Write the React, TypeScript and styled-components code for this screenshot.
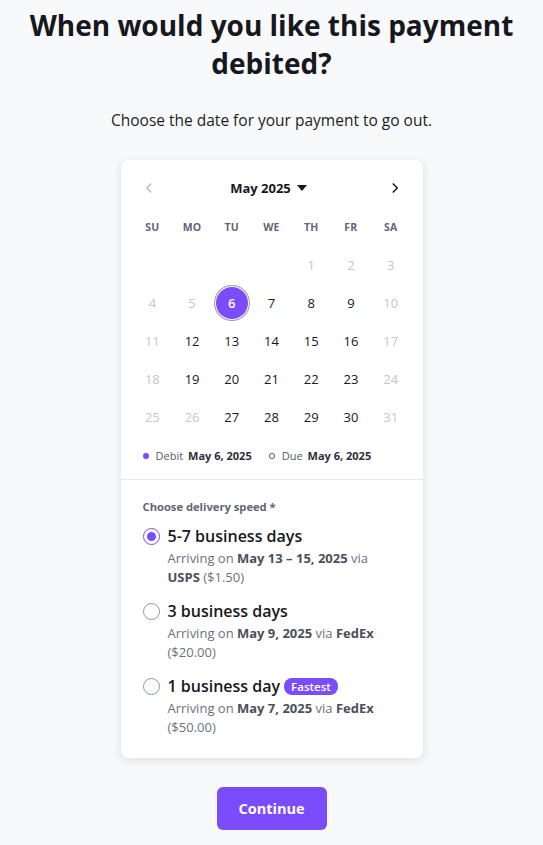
import React, {useState} from "react";
import styled, {createGlobalStyle} from "styled-components";

const purple = "#7a4cfb";

const Global = createGlobalStyle`
  html, body {
    margin: 0;
    padding: 0;
    background: #f8f9fb;
  }
  body {
    font-family: "Open Sans", "Liberation Sans", sans-serif;
    color: #16181d;
  }
`;

const Page = styled.div`
  display: flex;
  flex-direction: column;
  align-items: center;
  padding-top: 6px;
  padding-bottom: 20px;
`;

const Title = styled.h1`
  margin: 0;
  font-size: 28px;
  line-height: 38px;
  font-weight: 700;
  text-align: center;
  color: #16181d;
  width: 500px;
`;

const Subtitle = styled.p`
  margin: 28px 0 0;
  font-size: 15.5px;
  line-height: 20px;
  color: #1c1e24;
`;

const Card = styled.div`
  margin-top: 30px;
  width: 302px;
  background: #fff;
  border-radius: 8px;
  box-shadow: 0 2px 10px rgba(20, 24, 40, 0.12);
`;

const CalendarSection = styled.div`
  padding: 16px 12px 15px;
  border-bottom: 1px solid #e6e8ec;
`;

const MonthBar = styled.div`
  display: flex;
  align-items: center;
  justify-content: space-between;
  height: 24px;
`;

const NavButton = styled.button<{$muted?: boolean}>`
  width: 32px;
  height: 24px;
  border: 0;
  background: none;
  padding: 0;
  display: flex;
  align-items: center;
  justify-content: center;
  color: ${p => (p.$muted ? "#b8bcc6" : "#16181d")};
  cursor: pointer;
`;

const MonthLabel = styled.div`
  display: flex;
  align-items: center;
  gap: 6px;
  font-size: 13px;
  font-weight: 700;
  color: #16181d;
  margin-right: 6px;
`;

const Grid = styled.div`
  display: grid;
  grid-template-columns: repeat(7, 1fr);
  grid-auto-rows: 38px;
  margin-top: 8px;
`;

const WeekDay = styled.div`
  display: flex;
  align-items: center;
  justify-content: center;
  font-size: 10.5px;
  font-weight: 700;
  color: #5f6675;
  letter-spacing: 0.2px;
`;

const DayCell = styled.div`
  display: flex;
  align-items: center;
  justify-content: center;
`;

const Day = styled.span<{$state: "off" | "on" | "selected"}>`
  width: 34px;
  height: 34px;
  border-radius: 50%;
  display: flex;
  align-items: center;
  justify-content: center;
  font-size: 13px;
  color: ${p => (p.$state === "off" ? "#c3c7cf" : p.$state === "selected" ? "#fff" : "#16181d")};
  background: ${p => (p.$state === "selected" ? purple : "transparent")};
  box-shadow: ${p => (p.$state === "selected" ? "inset 0 0 0 1px #fff, 0 0 0 1px #9aa0ad" : "none")};
  font-weight: ${p => (p.$state === "selected" ? 600 : 400)};
`;

const Legend = styled.div`
  display: flex;
  align-items: center;
  gap: 17px;
  margin-top: 12px;
  padding-left: 10px;
  font-size: 11px;
  line-height: 16px;
  color: #555b68;
`;

const LegendItem = styled.span`
  display: flex;
  align-items: center;
  gap: 5px;
  b {
    color: #2b2f3a;
    font-weight: 700;
  }
`;

const Dot = styled.span<{$hollow?: boolean}>`
  width: 6px;
  height: 6px;
  border-radius: 50%;
  box-sizing: border-box;
  background: ${p => (p.$hollow ? "transparent" : purple)};
  border: ${p => (p.$hollow ? "1px solid #555b68" : "none")};
  margin-right: 2px;
`;

const DeliverySection = styled.div`
  padding: 20px 22px 21px;
`;

const FieldLabel = styled.div`
  font-size: 11.2px;
  line-height: 14px;
  font-weight: 700;
  color: #5f6675;
`;

const Options = styled.div`
  display: flex;
  flex-direction: column;
  gap: 13px;
  margin-top: 11px;
`;

const Option = styled.label`
  display: flex;
  gap: 8px;
  cursor: pointer;
`;

const Radio = styled.span<{$checked: boolean}>`
  flex: none;
  width: 17px;
  height: 17px;
  margin-top: 2.5px;
  border-radius: 50%;
  box-sizing: border-box;
  border: 1.5px solid ${p => (p.$checked ? purple : "#8f95a3")};
  display: flex;
  align-items: center;
  justify-content: center;
  &::after {
    content: "";
    width: 9px;
    height: 9px;
    border-radius: 50%;
    background: ${p => (p.$checked ? purple : "transparent")};
  }
`;

const OptionBody = styled.div`
  display: flex;
  flex-direction: column;
`;

const OptionTitle = styled.div`
  display: flex;
  align-items: center;
  gap: 4px;
  font-size: 16px;
  line-height: 22px;
  font-weight: 600;
  color: #16181d;
`;

const Badge = styled.span`
  background: ${purple};
  color: #fff;
  font-size: 11.5px;
  font-weight: 600;
  line-height: 17px;
  padding: 0 7px;
  border-radius: 8px;
`;

const OptionText = styled.div`
  margin-top: 2px;
  font-size: 13px;
  line-height: 19px;
  color: #6b7180;
  b {
    color: #4b505c;
    font-weight: 700;
  }
`;

const ContinueButton = styled.button`
  margin-top: 29px;
  width: 110px;
  height: 43px;
  border: 0;
  border-radius: 6px;
  background: ${purple};
  color: #fff;
  font-family: inherit;
  font-size: 14.5px;
  font-weight: 700;
  cursor: pointer;
`;

const weekDays = ["SU", "MO", "TU", "WE", "TH", "FR", "SA"];
const offDays = [1, 2, 3, 4, 5, 10, 11, 17, 18, 24, 25, 26, 31];

const speeds = [
  {id: "usps", title: "5-7 business days", dates: "May 13 – 15, 2025", carrier: "USPS", price: "($1.50)"},
  {id: "fedex3", title: "3 business days", dates: "May 9, 2025", carrier: "FedEx", price: "($20.00)"},
  {id: "fedex1", title: "1 business day", dates: "May 7, 2025", carrier: "FedEx", price: "($50.00)", fastest: true},
];

function Chevron({dir}: {dir: "left" | "right"}) {
  return (
    <svg width="14" height="14" viewBox="0 0 24 24" fill="none" stroke="currentColor" strokeWidth="2.6" strokeLinecap="round" strokeLinejoin="round">
      {dir === "left" ? <path d="M15 5l-7 7 7 7"/> : <path d="M9 5l7 7-7 7"/>}
    </svg>
  );
}

export default function App() {
  const [selected, setSelected] = useState(6);
  const [speed, setSpeed] = useState("usps");
  const cells: (number | null)[] = [null, null, null, null];
  for (let d = 1; d <= 31; d++) cells.push(d);

  return (
    <Page>
      <Global/>
      <Title>When would you like this payment debited?</Title>
      <Subtitle>Choose the date for your payment to go out.</Subtitle>
      <Card>
        <CalendarSection>
          <MonthBar>
            <NavButton $muted><Chevron dir="left"/></NavButton>
            <MonthLabel>
              May 2025
              <svg width="10" height="6" viewBox="0 0 10 6"><path d="M0 0h10L5 6z" fill="#16181d"/></svg>
            </MonthLabel>
            <NavButton><Chevron dir="right"/></NavButton>
          </MonthBar>
          <Grid>
            {weekDays.map(w => <WeekDay key={w}>{w}</WeekDay>)}
            {cells.map((d, i) => (
              <DayCell key={i}>
                {d !== null && (
                  <Day
                    $state={d === selected ? "selected" : offDays.includes(d) ? "off" : "on"}
                    onClick={() => !offDays.includes(d) && setSelected(d)}
                  >
                    {d}
                  </Day>
                )}
              </DayCell>
            ))}
          </Grid>
          <Legend>
            <LegendItem><Dot/>Debit <b>May {selected}, 2025</b></LegendItem>
            <LegendItem><Dot $hollow/>Due <b>May 6, 2025</b></LegendItem>
          </Legend>
        </CalendarSection>
        <DeliverySection>
          <FieldLabel>Choose delivery speed *</FieldLabel>
          <Options>
            {speeds.map(s => (
              <Option key={s.id} onClick={() => setSpeed(s.id)}>
                <Radio $checked={speed === s.id}/>
                <OptionBody>
                  <OptionTitle>
                    {s.title}
                    {s.fastest && <Badge>Fastest</Badge>}
                  </OptionTitle>
                  <OptionText>
                    Arriving on <b>{s.dates}</b> via <b>{s.carrier}</b> {s.price}
                  </OptionText>
                </OptionBody>
              </Option>
            ))}
          </Options>
        </DeliverySection>
      </Card>
      <ContinueButton>Continue</ContinueButton>
    </Page>
  );
}
